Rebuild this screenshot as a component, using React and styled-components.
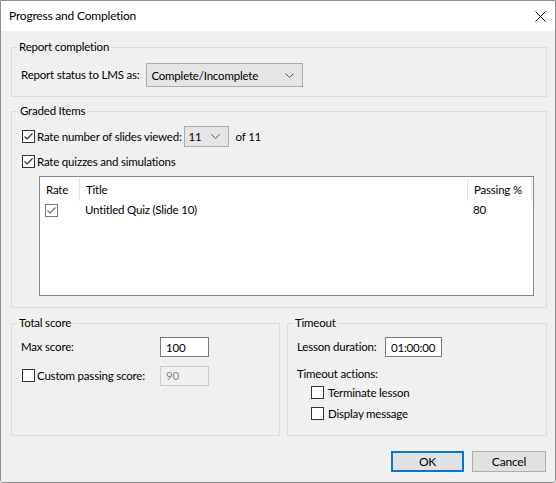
import styled, { createGlobalStyle } from "styled-components";

const GlobalStyle = createGlobalStyle`
  html, body {
    margin: 0;
    padding: 0;
    background: #ffffff;
  }
  * {
    box-sizing: border-box;
  }
`;

const Checkbox = ({ checked, muted }) => (
  <StBox $muted={muted}>
    {checked && (
      <svg width="11" height="11" viewBox="0 0 11 11">
        <polyline
          points="1.5,5.5 4,8 9.5,2.5"
          fill="none"
          stroke={muted ? "#6d6d6d" : "#333333"}
          strokeWidth="1.2"
        />
      </svg>
    )}
  </StBox>
);

const Chevron = () => (
  <svg width="9" height="5" viewBox="0 0 9 5">
    <polyline points="0.5,0.5 4.5,4.5 8.5,0.5" fill="none" stroke="#555" strokeWidth="1" />
  </svg>
);

const App = () => {
  return (
    <>
      <GlobalStyle />
      <StWindow>
        <StTitleBar>
          <StTitle>Progress and Completion</StTitle>
          <StClose>
            <svg width="11" height="11" viewBox="0 0 11 11">
              <path d="M0.5 0.5 L10.5 10.5 M10.5 0.5 L0.5 10.5" stroke="#000" strokeWidth="1" />
            </svg>
          </StClose>
        </StTitleBar>

        <StBody>
          <StGroup $h={58} $pt={8} $pl={9}>
            <StLegend>Report completion</StLegend>
            <StRow>
              <StText>Report status to LMS as:</StText>
              <StSelect $w={157} $h={24} $ml={1}>
                <span>Complete/Incomplete</span>
                <Chevron />
              </StSelect>
            </StRow>
          </StGroup>

          <StGroup $h={205} $pt={7} $pl={10} $mt={6}>
            <StLegend>Graded Items</StLegend>
            <StCheckRow>
              <Checkbox checked />
              <StText>Rate number of slides viewed:</StText>
              <StSelect $w={45} $h={21}>
                <span>11</span>
                <Chevron />
              </StSelect>
              <StText $ml={5}>of 11</StText>
            </StCheckRow>
            <StCheckRow $mt={4}>
              <Checkbox checked />
              <StText>Rate quizzes and simulations</StText>
            </StCheckRow>

            <StList>
              <StListHead>
                <StHeadCell>Rate</StHeadCell>
                <StHeadCell>Title</StHeadCell>
                <StHeadCell>Passing %</StHeadCell>
              </StListHead>
              <StListRow>
                <StCell>
                  <Checkbox checked muted />
                </StCell>
                <StCell>Untitled Quiz (Slide 10)</StCell>
                <StCell>80</StCell>
              </StListRow>
            </StList>
          </StGroup>

          <StBottomRow>
            <StGroup $h={121} $w={269} $pt={6} $pl={9}>
              <StLegend>Total score</StLegend>
              <StFormGrid $label={139}>
                <StText>Max score:</StText>
                <StInput $w={49}>100</StInput>
                <StCheckRow $gap={2}>
                  <StCheckWrap>
                    <Checkbox />
                  </StCheckWrap>
                  <StText>Custom passing score:</StText>
                </StCheckRow>
                <StInput $w={49} $disabled>
                  90
                </StInput>
              </StFormGrid>
            </StGroup>

            <StGroup $h={121} $w={260} $pt={6} $pl={9}>
              <StLegend>Timeout</StLegend>
              <StFormGrid $label={88}>
                <StText>Lesson duration:</StText>
                <StInput $w={57}>01:00:00</StInput>
              </StFormGrid>
              <StSubTitle>Timeout actions:</StSubTitle>
              <StActions>
                <StCheckRow $gap={4}>
                  <Checkbox />
                  <StText>Terminate lesson</StText>
                </StCheckRow>
                <StCheckRow $gap={4}>
                  <Checkbox />
                  <StText>Display message</StText>
                </StCheckRow>
              </StActions>
            </StGroup>
          </StBottomRow>

          <StButtons>
            <StButton $primary>OK</StButton>
            <StButton $w={74}>Cancel</StButton>
          </StButtons>
        </StBody>
      </StWindow>
    </>
  );
};

export default App;

// st

const StWindow = styled.div`
  width: 556px;
  height: 483px;
  border: 1px solid #8e8e8e;
  border-radius: 0 0 3px 3px;
  display: flex;
  flex-direction: column;
  overflow: hidden;
  font-family: Lato, "Liberation Sans", sans-serif;
  font-size: 11.5px;
  letter-spacing: -0.2px;
  color: #000000;
`;

const StTitleBar = styled.div`
  height: 30px;
  flex-shrink: 0;
  background: #ffffff;
  display: flex;
  align-items: center;
  justify-content: space-between;
  padding: 0 9px 0 8px;
`;

const StTitle = styled.div`
  font-size: 12px;
  line-height: 16px;
`;

const StClose = styled.div`
  width: 11px;
  height: 11px;
  display: flex;
`;

const StBody = styled.div`
  flex: 1;
  background: #f0f0f0;
  padding: 8px 8px 0 10px;
  display: flex;
  flex-direction: column;
`;

const StGroup = styled.fieldset`
  margin: ${(p) => p.$mt || 0}px 0 0 0;
  padding: ${(p) => p.$pt}px 8px 0 ${(p) => p.$pl}px;
  border: 1px solid #dcdcdc;
  height: ${(p) => p.$h}px;
  width: ${(p) => (p.$w ? `${p.$w}px` : "auto")};
  min-width: 0;
  flex-shrink: 0;
`;

const StLegend = styled.legend`
  padding: 0 2px;
  margin-left: -4px;
  line-height: 16px;
`;

const StRow = styled.div`
  display: flex;
  align-items: center;
  gap: 6px;
`;

const StText = styled.span`
  line-height: 16px;
  white-space: nowrap;
  margin-left: ${(p) => p.$ml || 0}px;
`;

const StSelect = styled.div`
  width: ${(p) => p.$w}px;
  height: ${(p) => p.$h}px;
  margin-left: ${(p) => p.$ml || 0}px;
  background: #e5e5e5;
  border: 1px solid #acacac;
  display: flex;
  align-items: center;
  justify-content: space-between;
  padding: 0 8px 0 4px;
`;

const StCheckRow = styled.div`
  display: flex;
  align-items: center;
  gap: ${(p) => (p.$gap === undefined ? 2 : p.$gap)}px;
  height: 21px;
  margin-top: ${(p) => p.$mt || 0}px;
`;

const StCheckWrap = styled.div`
  margin-left: 1px;
  display: flex;
`;

const StBox = styled.div`
  width: 13px;
  height: 13px;
  flex-shrink: 0;
  background: #ffffff;
  border: 1px solid ${(p) => (p.$muted ? "#7a7a7a" : "#333333")};
  display: flex;
  align-items: center;
  justify-content: center;
`;

const StList = styled.div`
  margin: 4px 0 0 17px;
  width: 495px;
  height: 120px;
  background: #ffffff;
  border: 1px solid #828790;
`;

const StListHead = styled.div`
  display: grid;
  grid-template-columns: 40px 388px 64px;
  height: 24px;
  padding-top: 1px;
`;

const StHeadCell = styled.div`
  display: flex;
  align-items: center;
  padding-left: 6px;
  border-right: 1px solid #e5e5e5;
  line-height: 16px;
`;

const StListRow = styled.div`
  display: grid;
  grid-template-columns: 40px 388px 64px;
  height: 18px;
  align-items: center;
`;

const StCell = styled.div`
  display: flex;
  align-items: center;
  padding-left: 5px;
  line-height: 16px;
`;

const StBottomRow = styled.div`
  display: flex;
  gap: 7px;
  margin-top: 7px;
`;

const StFormGrid = styled.div`
  display: grid;
  grid-template-columns: ${(p) => p.$label}px auto;
  row-gap: 8px;
  align-items: center;
  justify-items: start;
`;

const StInput = styled.div`
  width: ${(p) => p.$w}px;
  height: 20px;
  border: 1px solid ${(p) => (p.$disabled ? "#cccccc" : "#7a7a7a")};
  background: ${(p) => (p.$disabled ? "#f0f0f0" : "#ffffff")};
  color: ${(p) => (p.$disabled ? "#838383" : "#000000")};
  display: flex;
  align-items: center;
  padding-left: 5px;
`;

const StSubTitle = styled.div`
  margin-top: 9px;
  line-height: 16px;
`;

const StActions = styled.div`
  padding-left: 14px;
  display: flex;
  flex-direction: column;
`;

const StButtons = styled.div`
  display: flex;
  justify-content: flex-end;
  gap: 8px;
  margin-top: 15px;
  padding-right: 1px;
`;

const StButton = styled.button`
  width: ${(p) => p.$w || 73}px;
  height: 21px;
  background: #e1e1e1;
  border: ${(p) => (p.$primary ? "2px solid #0078d7" : "1px solid #adadad")};
  font-family: inherit;
  font-size: 12px;
  letter-spacing: inherit;
  color: #000000;
  padding: 0;
`;
